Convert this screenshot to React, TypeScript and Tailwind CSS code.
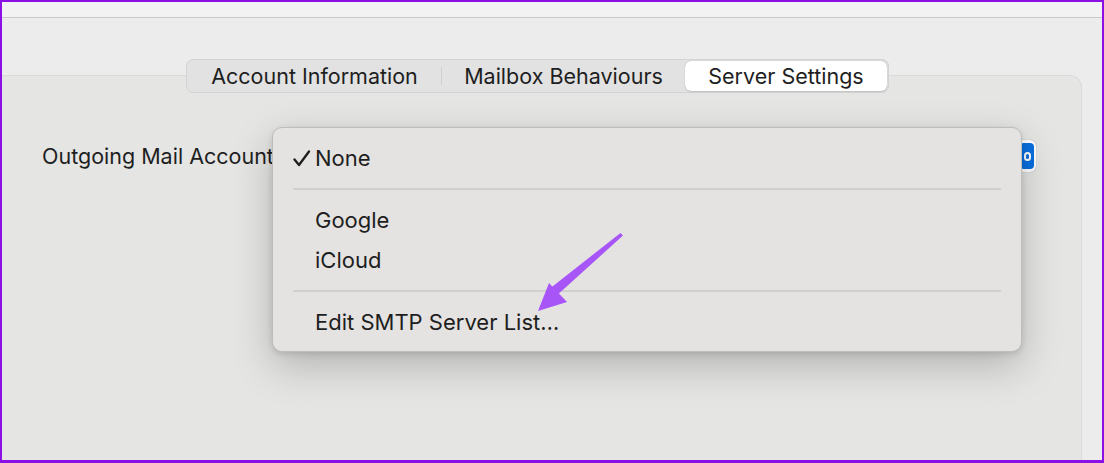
import React from "react";

const font = { fontFamily: "Inter, 'Open Sans', 'Liberation Sans', sans-serif" };

function Tabs() {
  return (
    <div className="relative z-10 flex h-[34px] w-[703px] items-center rounded-[7px] border border-[#d3d3d3] bg-[#e2e2e2] p-[1px] text-[21.5px] text-[#1e1e1e]">
      <div className="flex h-full w-[253px] items-center justify-center">Account Information</div>
      <div className="h-[18px] w-px bg-[#cfcfcf]" />
      <div className="flex h-full w-[243px] items-center justify-center">Mailbox Behaviours</div>
      <div className="flex h-full flex-1 items-center justify-center rounded-[6px] bg-white shadow-[0_0_1px_rgba(0,0,0,0.35),0_1px_1px_rgba(0,0,0,0.1)]">
        Server Settings
      </div>
    </div>
  );
}

function PopupButton() {
  return (
    <div className="flex h-[32px] w-[330px] items-center justify-end rounded-[6px] bg-white p-[2px] shadow-[0_0_1px_rgba(0,0,0,0.4)]">
      <div className="flex h-[26px] w-[14px] items-center justify-center rounded-[4px] bg-[#0a6fe0]">
        <div className="h-[9px] w-[7px] rounded-full border-2 border-white" />
      </div>
    </div>
  );
}

function MenuRow({ label, checked }: { label: string; checked?: boolean }) {
  return (
    <div className="flex h-[40px] items-center">
      <div className="flex w-[42px] justify-end pr-[4px]">
        {checked && (
          <svg width="18" height="17" viewBox="0 0 18 17">
            <path d="M1.5 9.5 L6 15 L16 1.5" fill="none" stroke="#1e1e1e" strokeWidth="2.3" strokeLinecap="round" strokeLinejoin="round" />
          </svg>
        )}
      </div>
      <span>{label}</span>
    </div>
  );
}

function Separator() {
  return (
    <div className="flex h-[22px] items-center px-[20px]">
      <div className="h-[2px] w-full bg-[#cfcfcd]" />
    </div>
  );
}

function Menu() {
  return (
    <div className="absolute left-[270px] top-[125px] z-20 h-[225px] w-[750px] rounded-[10px] border border-[#bdbdbb] bg-[#e4e3e1] py-[10px] text-[22px] text-[#1e1e1e] shadow-[0_14px_40px_rgba(0,0,0,0.22),0_2px_6px_rgba(0,0,0,0.12)]">
      <MenuRow label="None" checked />
      <Separator />
      <MenuRow label="Google" />
      <MenuRow label="iCloud" />
      <Separator />
      <MenuRow label="Edit SMTP Server List…" />
    </div>
  );
}

function Arrow() {
  return (
    <svg className="pointer-events-none absolute left-[-2px] top-[-2px] z-30" width="1104" height="463" viewBox="0 0 1104 463">
      <polygon points="620.5,233 623,235.5 555,297 548,290" fill="#a855f7" />
      <polygon points="549,283 567,302 538,311" fill="#a855f7" />
    </svg>
  );
}

export default function App() {
  return (
    <div
      className="relative h-[463px] w-[1104px] overflow-hidden border-2 border-b-[3px] border-[#8b10e6] bg-[#ececec]"
      style={font}
    >
      <div className="h-[16px] border-b border-[#c9c9c9] bg-[#f2f2f2]" />
      <div className="ml-[-9px] flex w-[1089px] flex-col items-center pt-[41px]">
        <Tabs />
        <div className="mt-[-18px] h-[420px] w-full rounded-[12px] border border-[#dadada] bg-[#e5e5e4]">
          <div className="flex items-center pl-[48px] pr-[45px] pt-[64px] text-[21.5px] text-[#1e1e1e]">
            <span className="whitespace-nowrap">Outgoing Mail Account:</span>
            <div className="ml-auto">
              <PopupButton />
            </div>
          </div>
        </div>
      </div>
      <Menu />
      <Arrow />
    </div>
  );
}
